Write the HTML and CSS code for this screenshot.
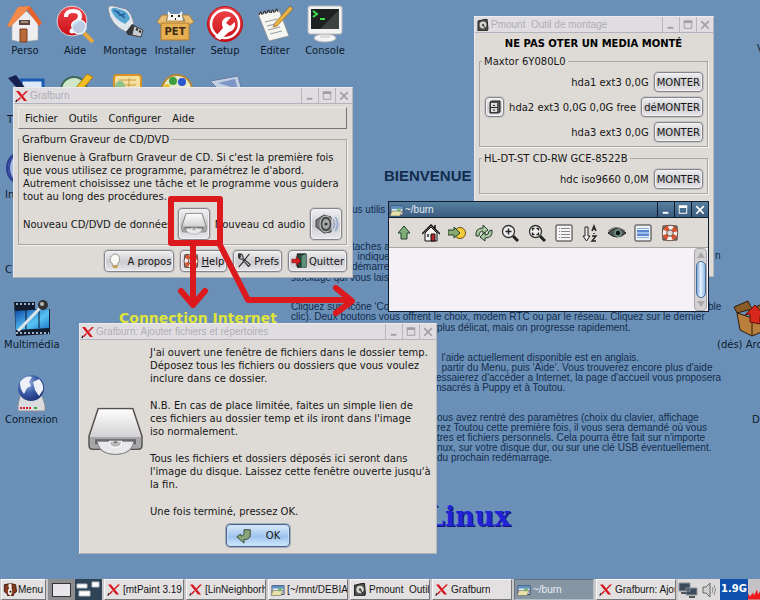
FILE: index.html
```
<!DOCTYPE html>
<html lang="fr">
<head>
<meta charset="utf-8">
<title>Grafburn</title>
<link rel="stylesheet" href="styles.css">
</head>
<body>
<svg class="defs" aria-hidden="true">
  <defs>
    <linearGradient id="gGrey" x1="0" y1="0" x2="0" y2="1"><stop offset="0" stop-color="#fff"/><stop offset="1" stop-color="#bdbdc0"/></linearGradient>
    <linearGradient id="gRed" x1="0" y1="0" x2="0" y2="1"><stop offset="0" stop-color="#f0484c"/><stop offset="1" stop-color="#c80c14"/></linearGradient>
    <linearGradient id="gSky" x1="0" y1="0" x2="1" y2="1"><stop offset="0" stop-color="#0a46a8"/><stop offset=".6" stop-color="#58c4f4"/><stop offset="1" stop-color="#1a70c8"/></linearGradient>
    <radialGradient id="gGlobe" cx=".35" cy=".3" r=".8"><stop offset="0" stop-color="#9fb8e4"/><stop offset=".5" stop-color="#3b5ca8"/><stop offset="1" stop-color="#182c70"/></radialGradient>
    <symbol id="x-logo" viewBox="0 0 14 12"><path d="M1 1h3l8 10H9z" fill="#d8141c"/><path d="M11 1h2L8 6 7 5zM5 7l1 1-3 3H1z" fill="#d8141c"/><path d="M0 12l2-3v3z" fill="#222"/></symbol>
    <symbol id="folder-window" viewBox="0 0 14 12"><path d="M1 2h12v9H1z" fill="#dfeef6" stroke="#446" /><path d="M1 2h12v3H1z" fill="#5d90c0"/><path d="M0 12l2-5h10l-2 5z" fill="#e9e0a8" stroke="#666" stroke-width=".6"/><circle cx="9" cy="6" r="2" fill="#7ab07c"/></symbol>
    <symbol id="disk-box" viewBox="0 0 12 12"><path d="M1 2l9-2 1 10-1 2H1z" fill="#4e504c" stroke="#222"/><circle cx="6" cy="6" r="3.4" fill="#d7d8d0"/><circle cx="6" cy="6" r="1.2" fill="#555"/><path d="M6 6l3 4" stroke="#222"/></symbol>
    <symbol id="drive" viewBox="0 0 56 48"><path d="M11 1h34l9 27v9q0 4-4 4H6q-4 0-4-4v-9z" fill="url(#gGrey)" stroke="#55504e" stroke-width="1.5"/><path d="M3 29h50v8q0 3-3 3H6q-3 0-3-3z" fill="#a7a7a9"/><path d="M8 31h40v5H8z" fill="#5d5f61"/><path d="M10 33h36q-2 13-18 13T10 33z" fill="#e8e8ea" stroke="#88888a"/><path d="M22 33h12q0 6-6 6t-6-6z" fill="#b9babc" stroke="#fff"/><path d="M26 33h4q0 2-2 2t-2-2z" fill="#777"/></symbol>
    <symbol id="buoy" viewBox="0 0 18 18"><path d="M2 6V2h4M12 2h4v4M16 12v4h-4M6 16H2v-4" fill="none" stroke="#3a1c14"/><circle cx="9" cy="9" r="5.5" fill="none" stroke="#3a1c14" stroke-width="5.4"/><circle cx="9" cy="9" r="5.5" fill="none" stroke="#f6f1ec" stroke-width="4"/><circle cx="9" cy="9" r="5.5" fill="none" stroke="#d9502c" stroke-width="4" stroke-dasharray="4.32 4.32" stroke-dashoffset="-2.16"/></symbol>
    <symbol id="min" viewBox="0 0 17 15"><path d="M5 10h6v2H5z"/></symbol>
    <symbol id="max" viewBox="0 0 17 15"><path d="M4 3h9v9H4zM5 6v5h7V6z" fill-rule="evenodd"/></symbol>
    <symbol id="close" viewBox="0 0 17 15"><path d="M4.500 4l8 8M12.500 4l-8 8" stroke="currentColor" stroke-width="1.800"/></symbol>
  </defs>
</svg>

<main class="desktop">
  <div class="wallpaper">
    <p class="wp-title">BIENVENUE</p>
    <p class="wp wp-a">us utilis</p>
    <p class="wp wp-b">taches a<br>&nbsp; indique<br>démarre.</p>
    <p class="wp wp-c">stockage qui vous laiss</p>
    <p class="wp wp-d">n</p>
    <p class="wp wp-e">ble</p>
    <p class="wp wp-f">Cliquez sur l'icône 'Co<br>clic). Deux boutons vous offrent le choix, modem RTC ou par le réseau. Cliquez sur le dernier</p>
    <p class="wp wp-g">plus délicat, mais on progresse rapidement.</p>
    <p class="wp wp-h">&nbsp; l'aide actuellement disponible est en anglais.<br>&nbsp; partir du Menu, puis 'Aide'. Vous trouverez encore plus d'aide<br>essaierez d'accéder a Internet, la page d'accueil vous proposera<br>nsacrés à Puppy et à Toutou.</p>
    <p class="wp wp-i">ous avez rentré des paramètres (choix du clavier, affichage<br>rez Toutou cette première fois, il vous sera demandé où vous<br>tres et fichiers personnels. Cela pourra être fait sur n'importe<br>nux, sur votre disque dur, ou sur une clé USB éventuellement.<br>du prochain redémarrage.</p>
    <p class="wp-net">Connection Internet</p>
    <p class="wp-linux">Linux</p>
  </div>

  <nav class="launchers" aria-label="Bureau">
    <a class="launcher" href="#"><svg viewBox="0 0 38 38"><path d="M6 18v17l9 2 17-2V17L20 6z" fill="#eeeef0" stroke="#aaa" stroke-width=".6"/><path d="M1 21L12 2l12-1 12 17-3 3L21 5 4 22z" fill="#e4632a"/><path d="M12 2l12-1-3 4L4 22l-3-1z" fill="#f28a4c"/><path d="M14 24h7v13h-7z" fill="#b86a3c" stroke="#7a3c1c"/><path d="M13 15h11v5H13z" fill="#5d4740"/><path d="M15 17h7" stroke="#f2d2b0"/></svg>Perso</a>
    <a class="launcher" href="#"><svg viewBox="0 0 38 38"><circle cx="16" cy="16" r="15" fill="url(#gRed)" stroke="#d8d8dc" stroke-width="1"/><path d="M10 12q0-6 7-6t7 5q0 4-4 6-3 1-3 4" fill="none" stroke="#fff" stroke-width="4"/><circle cx="16" cy="26" r="2.500" fill="#fff"/><path d="M28 28l9 9" stroke="#e8a83c" stroke-width="4"/><circle cx="23" cy="22" r="7" fill="#b9def4" fill-opacity=".9" stroke="#e6eef4" stroke-width="1.500"/></svg>Aide</a>
    <a class="launcher" href="#"><svg viewBox="0 0 38 38"><path d="M2 4q0-4 6-3l12 3q6 4 8 15l-8 8Q4 20 2 4z" fill="#dfe6ee" stroke="#7c8796"/><path d="M5 5q1-3 5-2l9 3q4 3 5 8l-5 5Q8 14 5 5z" fill="#58a4d0"/><path d="M8 5l11 8m-7-7l2 5m1-1l4-1" stroke="#1e5a98" stroke-width="1.300"/><path d="M26 19l11 6-2 7-13-2-2-3z" fill="#35373b"/><path d="M28 21l9 4-2 7-9-2z" fill="#c9ccd0" stroke="#444"/><path d="M30 24l2 1m1 1l2 1" stroke="#222" stroke-width="2"/></svg>Montage</a>
    <a class="launcher" href="#"><svg viewBox="0 0 38 38"><path d="M12 6l3 3h8l3-3 1 12H11z" fill="#f7f5ee"/><path d="M15 11h2m5 0h2m-5 3h1" stroke="#222" stroke-width="2"/><path d="M1 17l5-7h6l-2 6h19l-3-6h7l5 7-5 3H5z" fill="#e8bf74" stroke="#a8752e" stroke-width=".8"/><path d="M5 18h28v17H5z" fill="#e5af52" stroke="#b27c30"/><text x="19" y="30" class="pet">PET</text></svg>Installer</a>
    <a class="launcher" href="#"><svg viewBox="0 0 38 38"><circle cx="19" cy="19" r="17.500" fill="url(#gRed)" stroke="#c01018"/><circle cx="19" cy="19" r="14" fill="none" stroke="#fff" stroke-width="2.500"/><path d="M9 32l8-9q-3-7 2-10 3-2 6-1l-5 6 4 3 5-4q1 8-6 10l-9 8z" fill="#fff"/></svg>Setup</a>
    <a class="launcher" href="#"><svg viewBox="0 0 38 38"><path d="M2 9l21-4 10 26-20 5z" fill="#f5f5f2" stroke="#888" stroke-width=".7"/><path d="M3 10q2-6 3 0m1-1q2-6 3 0m1-1q2-6 3 0m1 0q2-6 3 0m1-1q2-6 3 0" fill="none" stroke="#333" stroke-width="1.200"/><path d="M9 17l12-3M11 21l12-3M12 25l12-3M14 29l12-3" stroke="#9a9a9a"/><path d="M34 1l3 3-16 17-4 1 2-4z" fill="#e9b246" stroke="#8a6420" stroke-width=".7"/></svg>Editer</a>
    <a class="launcher" href="#"><svg viewBox="0 0 38 38"><ellipse cx="19" cy="33" rx="11" ry="4" fill="#f4f4f4" stroke="#b4b4b8"/><path d="M14 27h10v6H14z" fill="#ddd"/><rect x="2" y="1" width="34" height="28" rx="2" fill="#f3f3f3" stroke="#b8b8bc"/><path d="M5 4h28v20H5z" fill="#1d2220"/><path d="M14 24L33 5v19z" fill="#3c4240"/><path d="M7 6l4 3-4 3M14 14h5" fill="none" stroke="#3de04c" stroke-width="2"/></svg>Console</a>
    <a class="launcher cut" href="#"><svg viewBox="0 0 38 38"><path d="M14 6h22v12H14z" fill="#dceafa" stroke="#1a5bb8" stroke-width="3"/><path d="M1 4l8-3 10 14h-8z" fill="#15204e"/></svg>T</a>
    <a class="launcher" href="#"><svg viewBox="0 0 38 38"><circle cx="18" cy="16" r="13" fill="#cfe6c8" stroke="#3f6a58" stroke-width="2"/><path d="M31 0l6 3-12 14-6-2z" fill="#f2bd22" stroke="#a87a14"/></svg></a>
    <a class="launcher" href="#"><svg viewBox="0 0 38 38"><rect x="8" y="1" width="27" height="24" rx="3" fill="#f6e0a0" stroke="#d89422" stroke-width="2"/><path d="M13 6h17M13 11h17M23 4v10" stroke="#c59a4a"/><circle cx="14" cy="12" r="5" fill="#8fc38c"/></svg></a>
    <a class="launcher" href="#"><svg viewBox="0 0 38 38"><circle cx="21" cy="16" r="15" fill="#e8e9c8" stroke="#b6852e" stroke-width="2"/><circle cx="17" cy="7" r="4" fill="#3c9e40"/><circle cx="26" cy="8" r="4" fill="#2b54d0"/><circle cx="11" cy="13" r="3" fill="#e8c820"/></svg></a>
    <a class="launcher" href="#"><svg viewBox="0 0 38 38"><path d="M4 7l28-5 4 15H14z" fill="#c2cfe2" stroke="#6478a4"/><path d="M12 9l17-4 3 10z" fill="#7c95c4"/></svg></a>
  </nav>
  <a class="launcher spot-web" href="#"><svg viewBox="0 0 38 38"><circle cx="19" cy="19" r="17" fill="#a9b8e0" stroke="#2a3c8c" stroke-width="2"/><path d="M8 7q-8 12 0 24" fill="none" stroke="#33489c" stroke-width="2"/></svg>In</a>
  <a class="launcher spot-c" href="#">C</a>
  <a class="launcher spot-media" href="#"><svg viewBox="0 0 38 38"><path d="M1 3h21v7h15v25l-34 2z" fill="#131c2e"/><path d="M2 12l34-2v19L3 31z" fill="url(#gSky)"/><path d="M3 5h18M3 34h33" stroke="#9fb4c8" stroke-width="2" stroke-dasharray="2 2"/><path d="M13 11v20m13-21v19" stroke="#0b1830"/><path d="M5 32L28 8" stroke="#dfe4ea" stroke-width="3"/><circle cx="30" cy="6" r="5" fill="#333"/><circle cx="29" cy="5" r="2" fill="#bbb"/></svg>Multimédia</a>
  <a class="launcher spot-connexion" href="#"><svg viewBox="0 0 38 38"><path d="M8 22h22l3 9v6H6v-6z" fill="#dcdce0" stroke="#8c8c94"/><path d="M8 34h12" stroke="#d02030" stroke-width="2" stroke-dasharray="2 1"/><path d="M22 34h3" stroke="#3a4" stroke-width="2"/><circle cx="19" cy="14" r="13" fill="url(#gGlobe)"/><path d="M8 8q6-7 12-5l-3 5 2 4-4 2-3 6q-4-5-4-12zM21 8l6-3q5 5 4 11l-4 6-4-6z" fill="#eef2f8"/></svg>Connexion</a>
  <a class="launcher spot-archive" href="#"><svg viewBox="0 0 38 38"><path d="M4 14l15 5 16-5-4 18-12 5-12-6z" fill="#b97f3c" stroke="#2e1c0c"/><path d="M4 14L1 8l14-6 4 8zM20 9L34 3l3 8-16 8z" fill="#8c5c28" stroke="#2e1c0c"/><path d="M19 19v18" stroke="#2e1c0c"/><path d="M12 16L22 6l10 11h-5v8l-10-2v-8z" fill="#d8281c" stroke="#601008"/></svg>(dés) Archiver</a>
  <a class="launcher spot-d" href="#">D</a>
  <span class="launcher spot-v">V</span>

  <section class="window pmount" aria-labelledby="t1">
    <header class="titlebar"><svg class="ti"><use href="#disk-box"/></svg><h2 id="t1">Pmount&nbsp; Outil de montage</h2><button aria-label="Réduire"><svg><use href="#min"/></svg></button><button aria-label="Agrandir"><svg><use href="#max"/></svg></button><button aria-label="Fermer"><svg><use href="#close"/></svg></button></header>
    <div class="pmount-body">
      <strong>NE PAS OTER UN MEDIA MONTÉ</strong>
      <fieldset>
        <legend>Maxtor 6Y080L0</legend>
        <div class="mount"><span>hda1 ext3 0,0G</span><button class="btn">MONTER</button></div>
        <div class="mount"><button class="btn disk" aria-label="Ouvrir hda2"><svg viewBox="0 0 12 14"><path d="M1 2l2-1h8v11l-2 1H1z" fill="#555" stroke="#222"/><path d="M2 3h6v9H2z" fill="#ddd"/><path d="M2 7.500h6M4 5.500h2M4 10h2" stroke="#222"/></svg></button><span>hda2 ext3 0,0G 0,0G free</span><button class="btn">déMONTER</button></div>
        <div class="mount"><span>hda3 ext3 0,0G</span><button class="btn">MONTER</button></div>
      </fieldset>
      <fieldset>
        <legend>HL-DT-ST CD-RW GCE-8522B</legend>
        <div class="mount"><span>hdc iso9660 0,0M</span><button class="btn">MONTER</button></div>
      </fieldset>
    </div>
  </section>

  <section class="window grafburn" aria-labelledby="t2">
    <header class="titlebar"><svg class="ti"><use href="#x-logo"/></svg><h2 id="t2">Grafburn</h2><button aria-label="Réduire"><svg><use href="#min"/></svg></button><button aria-label="Agrandir"><svg><use href="#max"/></svg></button><button aria-label="Fermer"><svg><use href="#close"/></svg></button></header>
    <div class="graf-body">
      <nav class="menubar"><button>Fichier</button><button>Outils</button><button>Configurer</button><button>Aide</button></nav>
      <fieldset>
        <legend>Grafburn Graveur de CD/DVD</legend>
        <p>Bienvenue à Grafburn Graveur de CD. Si c'est la première fois<br>que vous utilisez ce programme, paramétrez le d'abord.<br>Autrement choisissez une tâche et le programme vous guidera<br>tout au long des procédures.</p>
        <div class="tasks-row">
          <label for="data">Nouveau CD/DVD de données</label>
          <button class="btn big" id="data"><svg viewBox="0 0 56 48"><use href="#drive"/></svg></button>
          <label for="audio">Nouveau cd audio</label>
          <button class="btn big" id="audio"><svg viewBox="0 0 24 24"><path d="M2 8l8-5 7 2v15l-7 1-8-6z" fill="#77797b" stroke="#444"/><ellipse cx="12" cy="12" rx="6" ry="8" fill="#4b4e50" stroke="#ccc"/><ellipse cx="12" cy="12" rx="3.500" ry="5" fill="#aaada9"/><circle cx="12" cy="12" r="1.500" fill="#333"/><path d="M19 7q3 5 0 10M21.500 5q4 7 0 14" fill="none" stroke="#8aa3cc" stroke-width="1.300"/></svg></button>
        </div>
      </fieldset>
      <div class="actions">
        <button class="btn"><svg viewBox="0 0 18 18"><path d="M6 12Q2 9 4 5t5-4q4 0 5 4t-2 7v2H6z" fill="#f8f9f4" stroke="#8d8f8a"/><path d="M6 14h6v3H7z" fill="#c9a24c"/></svg>A propos</button>
        <button class="btn"><svg viewBox="0 0 18 18"><use href="#buoy"/></svg><span><u>H</u>elp</span></button>
        <button class="btn"><svg viewBox="0 0 18 18"><path d="M3 2q-1 5 4 5l7 8 2-2-8-7q0-5-4-5l1 3-1 1zM15 1l-7 9M9 9l-6 7" fill="#c9ccce" stroke="#333" stroke-width="1.300"/></svg>Prefs</button>
        <button class="btn"><svg viewBox="0 0 18 18"><path d="M7 1h10v15H7z" fill="#26463a" stroke="#111"/><path d="M12 3l5-2v15l-5 1z" fill="#5e9278"/><path d="M1 7h5V4l5 5-5 5v-3H1z" fill="#dd1c20" stroke="#701010" stroke-width=".7"/></svg>Quitter</button>
      </div>
    </div>
  </section>

  <section class="window burn" aria-labelledby="t3">
    <header class="titlebar"><svg class="ti"><use href="#folder-window"/></svg><h2 id="t3">~/burn</h2><button aria-label="Réduire"><svg><use href="#min"/></svg></button><button aria-label="Agrandir"><svg><use href="#max"/></svg></button><button aria-label="Fermer"><svg><use href="#close"/></svg></button></header>
    <div class="toolbar">
      <button aria-label="Parent"><svg viewBox="0 0 18 18"><path d="M9 2l6 7h-3v6H6V9H3z" fill="#7fae78" stroke="#22402a"/></svg></button>
      <button aria-label="Perso"><svg viewBox="0 0 18 18"><path d="M3 9v8h12V9L9 3z" fill="#f4f1ee" stroke="#111"/><path d="M0 10l9-9 9 9M13 1v4" fill="none" stroke="#111" stroke-width="1.500"/><path d="M9 10h4v7H9z" fill="#b8282c" stroke="#111"/><path d="M5 10h2v3H5z" fill="#556"/></svg></button>
      <button aria-label="Signets"><svg viewBox="0 0 18 18"><circle cx="12" cy="9" r="5.500" fill="#f4cc3c" stroke="#6b5416"/><path d="M0 6h6V3l6 6-6 5v-3H0z" fill="#8ba870" stroke="#22402a"/></svg></button>
      <button aria-label="Actualiser"><svg viewBox="0 0 18 18"><path d="M1 12Q0 4 8 4V1l5 5-5 4V7q-4 0-4 5zM17 6q1 8-7 8v3l-5-4 5-5v3q4 0 4-4z" fill="#a9c6a0" stroke="#22402a"/></svg></button>
      <button aria-label="Zoom avant"><svg viewBox="0 0 18 18"><path d="M12 12l5 5" stroke="#222" stroke-width="3"/><circle cx="7.500" cy="7.500" r="6" fill="#eee" stroke="#333" stroke-width="1.300"/><path d="M7.500 4.500v6M4.500 7.500h6" stroke="#222" stroke-width="1.500"/></svg></button>
      <button aria-label="Zoom auto"><svg viewBox="0 0 18 18"><path d="M12 12l5 5" stroke="#222" stroke-width="3"/><circle cx="7.500" cy="7.500" r="6" fill="#eee" stroke="#333" stroke-width="1.300"/><path d="M4.500 6.500v-2h2M8.500 4.500h2v2M10.500 8.500v2h-2M6.500 10.500h-2v-2" fill="none" stroke="#222" stroke-width="1.300"/></svg></button>
      <button aria-label="Détails"><svg viewBox="0 0 18 18"><rect x="1" y="1" width="16" height="16" rx="1" fill="#f5f5f5" stroke="#333"/><path d="M4 4.500h1m1 0h9M4 7.500h1m1 0h9M4 10.500h1m1 0h9M4 13.500h1m1 0h9" stroke="#888"/></svg></button>
      <button aria-label="Trier"><svg viewBox="0 0 18 18"><path d="M4 3h3v9h2l-3.500 5L2 12h2z" fill="#eee" stroke="#222"/><path d="M11 7l2-5 2 5m-3.500-2h3M13 9v1M11 12h4l-4 5h4" fill="none" stroke="#222" stroke-width="1.400"/></svg></button>
      <button aria-label="Fichiers cachés"><svg viewBox="0 0 18 18"><path d="M0 9q8-9 18 0-9 8-18 0z" fill="#4c5650" stroke="#222"/><path d="M0 7q8-7 17 0" fill="none" stroke="#666"/><circle cx="10" cy="9" r="4" fill="#6a8c80"/><circle cx="10" cy="9" r="2.200" fill="#101414"/></svg></button>
      <button aria-label="Sélection"><svg viewBox="0 0 18 18"><rect x="1" y="1" width="16" height="16" rx="1" fill="#eef2fa" stroke="#333"/><path d="M3 4.500h12M3 13.500h12" stroke="#8fabd8"/><path d="M3 7h12M3 11h12" stroke="#5a86d0" stroke-width="2"/><path d="M3 9h12" stroke="#9dbbe8" stroke-width="2"/></svg></button>
      <button aria-label="Aide"><svg viewBox="0 0 18 18"><use href="#buoy"/></svg></button>
    </div>
    <div class="files"><div class="scroll"><i class="up"></i><i class="thumb"></i><i class="down"></i></div></div>
  </section>

  <section class="window dialog" aria-labelledby="t4">
    <header class="titlebar"><svg class="ti"><use href="#x-logo"/></svg><h2 id="t4">Grafburn: Ajouter fichiers et répertoires</h2><button aria-label="Réduire"><svg><use href="#min"/></svg></button><button aria-label="Agrandir"><svg><use href="#max"/></svg></button><button aria-label="Fermer"><svg><use href="#close"/></svg></button></header>
    <div class="dialog-main">
      <svg class="drive" viewBox="0 0 56 48"><use href="#drive"/></svg>
      <div class="message">
        <p>J'ai ouvert une fenêtre de fichiers dans le dossier temp.<br>Déposez tous les fichiers ou dossiers que vous voulez<br>inclure dans ce dossier.</p>
        <p>N.B. En cas de place limitée, faites un simple lien de<br>ces fichiers au dossier temp et ils iront dans l'image<br>iso normalement.</p>
        <p>Tous les fichiers et dossiers déposés ici seront dans<br>l'image du disque. Laissez cette fenêtre ouverte jusqu'à<br>la fin.</p>
        <p>Une fois terminé, pressez OK.</p>
      </div>
    </div>
    <button class="btn ok"><svg viewBox="0 0 18 18"><path d="M9 2h7v6q0 5-7 5v4L1 10l4-3 1 2q4 0 3-7z" fill="#8ba678" stroke="#2c3c28"/></svg>OK</button>
  </section>

  <svg class="annotation" viewBox="0 0 200 130" aria-hidden="true"><path d="M11 9h49v44H11zM33 54v61M21 101l12 14 12-14M59 53l29 57h102M176 98l16 13-16 12" fill="none" stroke="#dc1a1e" stroke-width="6" stroke-linecap="round" stroke-linejoin="round"/></svg>
</main>

<footer class="taskbar">
  <button class="task menu"><svg viewBox="0 0 15 15"><path d="M1 2l5-1h4l4 1 1 8-3 2-1 3H5l-1-3-3-2z" fill="#8c3a1c" stroke="#2a1008"/><path d="M6 1h3l1 10-2 4-3-3z" fill="#f6efe8"/><path d="M5 6h1m4 0h1M7 10h2" stroke="#111" stroke-width="2"/></svg>Menu</button>
  <div class="pager"><button aria-label="Bureau 1"><i></i></button><button class="on" aria-label="Bureau 2"><svg viewBox="0 0 26 21"><path d="M1 5h10v4H1zM16 3h7v5h-7zM3 12h11v5H3z" fill="#fff" stroke="#b8c0c8"/></svg></button></div>
  <button class="task"><svg><use href="#x-logo"/></svg><span>[mtPaint 3.19</span></button>
  <button class="task"><svg><use href="#x-logo"/></svg><span>[LinNeighborhood</span></button>
  <button class="task"><svg><use href="#folder-window"/></svg><span>[~/mnt/DEBIAN</span></button>
  <button class="task"><svg><use href="#disk-box"/></svg><span>Pmount&nbsp; Outil</span></button>
  <button class="task"><svg><use href="#x-logo"/></svg><span>Grafburn</span></button>
  <button class="task active"><svg><use href="#folder-window"/></svg><span>~/burn</span></button>
  <button class="task"><svg><use href="#x-logo"/></svg><span>Grafburn: Ajouter</span></button>
  <div class="tray">
    <svg class="net" viewBox="0 0 20 16"><path d="M1 1h11v8H1zM8 6h11v7H8z" fill="#3c4c5c" stroke="#8c949c"/><path d="M3 11h5M11 15h6" stroke="#555" stroke-width="2"/></svg>
    <svg class="vol" viewBox="0 0 16 16"><path d="M2 5h3l4-4v14l-4-4H2z" fill="#d0d0d2" stroke="#666"/><path d="M11 5q2 3 0 6M13 3q3 5 0 10" fill="none" stroke="#888"/></svg>
    <span class="free">1.9G</span>
    <svg class="cpu" viewBox="0 0 12 20"><path d="M0 20v-6l2 3 3-4 1 3 3-6 1 5 2-3v8z" fill="#f01818"/></svg>
  </div>
</footer>
</body>
</html>
```
FILE: styles.css
```
* { box-sizing: border-box; }

body {
  margin: 0;
  height: 100vh;
  display: flex;
  flex-direction: column;
  overflow: hidden;
  background: #6a90b7;
  font: 10px/13px "DejaVu Sans", sans-serif;
  color: #161616;
}

p, h2 { margin: 0; }
button { margin: 0; padding: 0; border: 0; background: none; font: inherit; color: inherit; }
svg { display: block; flex: none; }
.defs { position: absolute; width: 0; height: 0; }

.desktop { position: relative; flex: 1; min-height: 0; overflow: hidden; }

/* Wallpaper */
.wallpaper p { position: absolute; white-space: nowrap; }
.wallpaper .wp { font: 10px/10px "Liberation Sans", sans-serif; color: #122c4c; }
.wp-title { left: 384px; top: 168px; font: bold 15px/16px "Liberation Sans", sans-serif; color: #122c4c; }
.wp-a { left: 352px; top: 205px; }
.wp-b { left: 352px; top: 242px; }
.wp-c { left: 291px; top: 273px; }
.wp-d { left: 715px; top: 251px; }
.wp-e { left: 708px; top: 302px; }
.wp-f { left: 291px; top: 302px; }
.wp-g { left: 437px; top: 323px; }
.wp-h { left: 436px; top: 353px; }
.wp-i { left: 437px; top: 413px; }
.wp-net { left: 119px; top: 310px; font: bold 14px/16px "DejaVu Sans", sans-serif; color: #dfe43a; }
.wp-linux { left: 426px; top: 501px; font: bold 27px/32px "DejaVu Serif", serif; color: #2222d8; text-shadow: 1px 1px #111a70; }

/* Desktop icons */
.launchers { position: absolute; left: 0; top: 5px; display: grid; grid-template-columns: repeat(7, 50px); grid-auto-rows: 69px; }
.launcher { display: flex; flex-direction: column; align-items: center; gap: 1px; color: #0c1a2c; text-decoration: none; white-space: nowrap; }
.launcher svg { width: 38px; height: 38px; }
.launcher.cut { align-items: flex-start; padding-left: 7px; }
.spot-web, .spot-c, .spot-media, .spot-connexion, .spot-archive, .spot-d, .spot-v { position: absolute; }
.spot-web { left: 5px; top: 149px; align-items: flex-start; }
.spot-c { left: 5px; top: 263px; }
.spot-media { left: 4px; top: 299px; }
.spot-connexion { left: 5px; top: 374px; }
.spot-archive { left: 717px; top: 299px; }
.spot-d { left: 752px; top: 413px; }
.spot-v { left: 757px; top: 42px; }
.pet { font: bold 10px "DejaVu Sans", sans-serif; text-anchor: middle; fill: #3e2a12; }

/* Windows */
.window { position: absolute; display: flex; flex-direction: column; background: #dedbd7; border: 1px solid; border-color: #eceaec #b9b9bd #aeb0b6 #eceaec; }
.titlebar { display: flex; align-items: center; height: 16px; background: #e0dde1; border-bottom: 1px solid #b4b2c0; color: #b0adb6; }
.titlebar h2 { flex: 1; font: 10px/14px "Liberation Sans", sans-serif; }
.titlebar .ti { width: 14px; height: 12px; margin: 0 1px; }
.titlebar button { width: 17px; height: 15px; border-left: 1px solid #b9b6c2; color: #a09da6; }
.titlebar button svg { width: 16px; height: 15px; fill: currentColor; }

.pmount { left: 474px; top: 16px; width: 240px; height: 261px; }
.grafburn { left: 13px; top: 87px; width: 340px; height: 191px; }
.burn { left: 388px; top: 201px; width: 321px; height: 111px; }
.dialog { left: 79px; top: 323px; width: 358px; height: 231px; }

fieldset { min-width: 0; margin: 0; border: 1px solid #a9a6a4; box-shadow: 1px 1px #f4f2f0; }
legend { margin-left: -3px; padding: 0 2px; }

.btn {
  display: inline-flex;
  align-items: center;
  justify-content: center;
  border: 1px solid #85858b;
  border-radius: 4px;
  background: linear-gradient(#f0f0f2, #cccbd0 55%, #e9e8ea);
  box-shadow: inset 0 0 0 1px #f2f1f3, 0 0 0 1px #c6c4c5;
}

.pmount-body { display: flex; flex-direction: column; padding: 4px 5px 0 4px; }
.pmount-body strong { text-align: center; color: #000; margin-bottom: 5px; }
.pmount fieldset { padding: 4px 4px 4px 5px; display: flex; flex-direction: column; gap: 5px; margin-bottom: 5px; }
.mount { display: flex; align-items: center; justify-content: flex-end; gap: 5px; }
.mount .btn { height: 20px; padding: 0 2px; }
.mount .disk { width: 19px; }
.disk svg { width: 12px; height: 14px; }

.graf-body { padding: 3px 5px 0 4px; }
.menubar { display: flex; gap: 11px; height: 22px; padding: 0 6px; border: 1px solid; border-color: #eeecea #77757a #77757a #eeecea; }
.graf-body fieldset { height: 112px; margin-top: 4px; padding: 5px 4px 0 4px; }
.tasks-row { display: flex; align-items: center; justify-content: space-between; margin-top: 5px; white-space: nowrap; }
.tasks-row label:first-child { width: 150px; overflow: hidden; }
.big { width: 32px; height: 32px; }
.big svg { width: 26px; height: 24px; }
.actions { display: flex; justify-content: flex-end; gap: 6px; margin-top: 5px; }
.actions .btn { height: 22px; padding: 0 2px; gap: 2px; }
.actions svg { width: 16px; height: 16px; }
.actions .btn:first-child { gap: 4px; }

.burn { border-color: #101c2c; background: #f5f2f7; }
.burn .titlebar { color: #e4ecf4; background: linear-gradient(#56809f, #3c5c80); border-color: #101c2c; }
.burn .titlebar button { color: #fff; border-color: #101c2c; }
.toolbar { display: grid; grid-template-columns: repeat(11, 1fr); height: 30px; padding: 0 25px 0 2px; align-items: center; justify-items: center; background: #dedbd7; border-bottom: 1px solid #a8a6a6; }
.toolbar svg { width: 18px; height: 18px; }
.files { flex: 1; display: flex; justify-content: flex-end; }
.scroll { width: 13px; margin-right: 1px; display: flex; flex-direction: column; align-items: center; gap: 3px; padding: 3px 0; border: 1px solid #a8a8a8; border-radius: 4px; background: #d3d1d1; }
.scroll .up, .scroll .down { border: 4px solid transparent; border-top: 0; border-bottom: 6px solid #a9a7a8; }
.scroll .down { border-bottom: 0; border-top: 6px solid #a9a7a8; }
.scroll .thumb { flex: 1; width: 10px; border: 1px solid #486c98; border-radius: 5px; background: linear-gradient(90deg, #7ca8dc, #e6f2fd 45%, #8fb9e6); }

.dialog-main { display: flex; align-items: center; gap: 6px; padding: 6px 0 0 7px; }
.drive { width: 57px; height: 50px; }
.message { display: flex; flex-direction: column; gap: 14px; }
.ok { align-self: center; width: 64px; height: 23px; margin-top: 6px; gap: 14px; border-color: #48648c; background: linear-gradient(#dcebfa, #9dc3ec 55%, #d0e8fc); box-shadow: inset 0 0 0 1px #c8e0f8, 0 0 0 1px #a5adb9; }
.ok svg { width: 16px; height: 16px; }

.annotation { position: absolute; left: 160px; top: 190px; width: 200px; height: 130px; }

/* Taskbar */
.taskbar { display: flex; gap: 2px; height: 21px; padding-left: 1px; background: #c9c7c9; font: 10px/14px "Liberation Sans", sans-serif; }
.task { flex: 1 1 0; min-width: 0; display: flex; align-items: center; gap: 2px; padding-left: 2px; overflow: hidden; white-space: nowrap; background: #e2e0e1; border: 1px solid; border-color: #f8f8f8 #77777a #77777a #f8f8f8; }
.task svg { width: 14px; height: 13px; }
.task span { overflow: hidden; }
.menu { flex: none; width: 45px; gap: 1px; padding-left: 1px; }
.active { background: #8695a4; color: #e6edf4; border-color: #66727e #b4bcc4 #b4bcc4 #66727e; }
.pager { display: flex; }
.pager button { display: grid; place-items: center; width: 27px; background: #8e8e90; }
.pager .on { background: #2e4356; }
.pager i { width: 19px; height: 14px; background: #e8e6e8; border: 1px solid #333; }
.pager svg { width: 26px; height: 21px; }
.tray { display: flex; align-items: center; gap: 2px; background: #dcdadb; }
.net { width: 20px; height: 16px; }
.vol { width: 18px; height: 16px; }
.free { align-self: stretch; width: 28px; line-height: 20px; text-align: center; font-family: "DejaVu Sans", sans-serif; font-size: 10px; font-weight: bold; color: #fff; background: #0e50ac; }
.cpu { width: 12px; height: 21px; margin-left: -2px; background: #c4c2c4; }
```
